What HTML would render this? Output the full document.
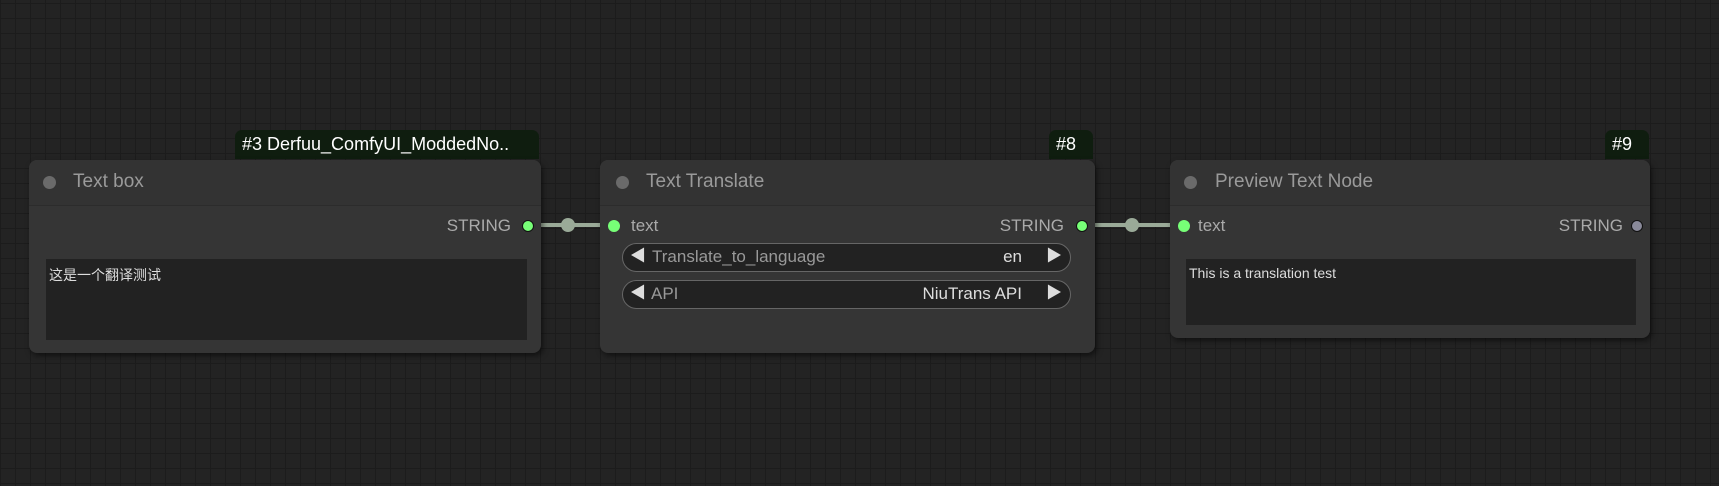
<!DOCTYPE html><html><head><style>
body{margin:0;width:1719px;height:486px;overflow:hidden;background-color:#232323;
background-image:linear-gradient(90deg,#1c1c1c 1px,transparent 1px),linear-gradient(#1c1c1c 1px,transparent 1px);
background-size:15px 15px;background-position:0 3px;font-family:"Liberation Sans","Noto Sans CJK SC",sans-serif;position:relative}
.n{position:absolute;background:#353535;border-radius:8px;box-shadow:2px 3px 6px rgba(0,0,0,.5)}
.t{height:45px;border-bottom:1px solid #2c2c2c;background:#333;border-radius:8px 8px 0 0;position:relative}
.t span{position:absolute;top:11px;font-size:19px;color:#9a9a9a}
.t i{position:absolute;left:13px;top:16px;width:13px;height:13px;border-radius:50%;background:#6a6a6a}
.b{position:absolute;height:29px;background:#0f1d0f;border-radius:7px 7px 0 0;color:#fff;font-size:18px;line-height:29px;padding:0 7px;box-sizing:border-box}
.l{position:absolute;font-size:17px;color:#aaa;top:56px}
.d{position:absolute;width:10px;height:10px;border-radius:50%;background:#7f7;border:1px solid #111;top:60px}
.ta{position:absolute;background:#222;color:#ddd;font-size:14px;padding:6px 3px;box-sizing:border-box}
.w{position:absolute;left:22px;width:449px;height:29px;box-sizing:border-box;border:1.5px solid #666;border-radius:15px;background:#222;font-size:17px;color:#999;line-height:26px}
.w .v{position:absolute;right:48px;color:#ddd}
.w .a{position:absolute;color:#ddd;font-size:16px}
</style></head><body>
<svg style="position:absolute;left:0;top:0" width="1719" height="486">
<line x1="463" y1="225" x2="604" y2="225" stroke="#9aaa98" stroke-width="4"/>
<circle cx="568" cy="225" r="7" fill="#9aaa98"/>
<line x1="1088" y1="225" x2="1178" y2="225" stroke="#9aaa98" stroke-width="4"/>
<circle cx="1132" cy="225" r="7" fill="#9aaa98"/>
</svg>
<div class="b" style="left:235px;top:130px;width:304px">#3 Derfuu_ComfyUI_ModdedNo..</div>
<div class="n" style="left:29px;top:160px;width:512px;height:193px">
<div class="t"><i style="left:14px"></i><span style="left:44px">Text box</span></div>
<div class="l" style="right:30px">STRING</div><div class="d" style="right:7px"></div>
<div class="ta" style="left:17px;top:99px;width:481px;height:81px">这是一个翻译测试</div>
</div>
<div class="b" style="left:1049px;top:130px;width:44px">#8</div>
<div class="n" style="left:600px;top:160px;width:495px;height:193px">
<div class="t"><i style="left:16px"></i><span style="left:46px">Text Translate</span></div>
<div class="d" style="left:8px;border-color:transparent"></div><div class="l" style="left:31px">text</div>
<div class="l" style="right:31px">STRING</div><div class="d" style="right:7px"></div>
<div class="w" style="top:83px"><span class="a" style="left:7px">◀</span><span style="left:29px;position:absolute">Translate_to_language</span><span class="v">en</span><span class="a" style="right:8px">▶</span></div>
<div class="w" style="top:120px"><span class="a" style="left:7px">◀</span><span style="left:28px;position:absolute">API</span><span class="v">NiuTrans API</span><span class="a" style="right:8px">▶</span></div>
</div>
<div class="b" style="left:1605px;top:130px;width:44px">#9</div>
<div class="n" style="left:1170px;top:160px;width:480px;height:178px">
<div class="t"><i style="left:14px"></i><span style="left:45px">Preview Text Node</span></div>
<div class="d" style="left:8px;border-color:transparent"></div><div class="l" style="left:28px">text</div>
<div class="l" style="right:27px">STRING</div><div class="d" style="right:7px;background:#8a8a9a"></div>
<div class="ta" style="left:16px;top:99px;width:450px;height:66px">This is a translation test</div>
</div>
</body></html>
